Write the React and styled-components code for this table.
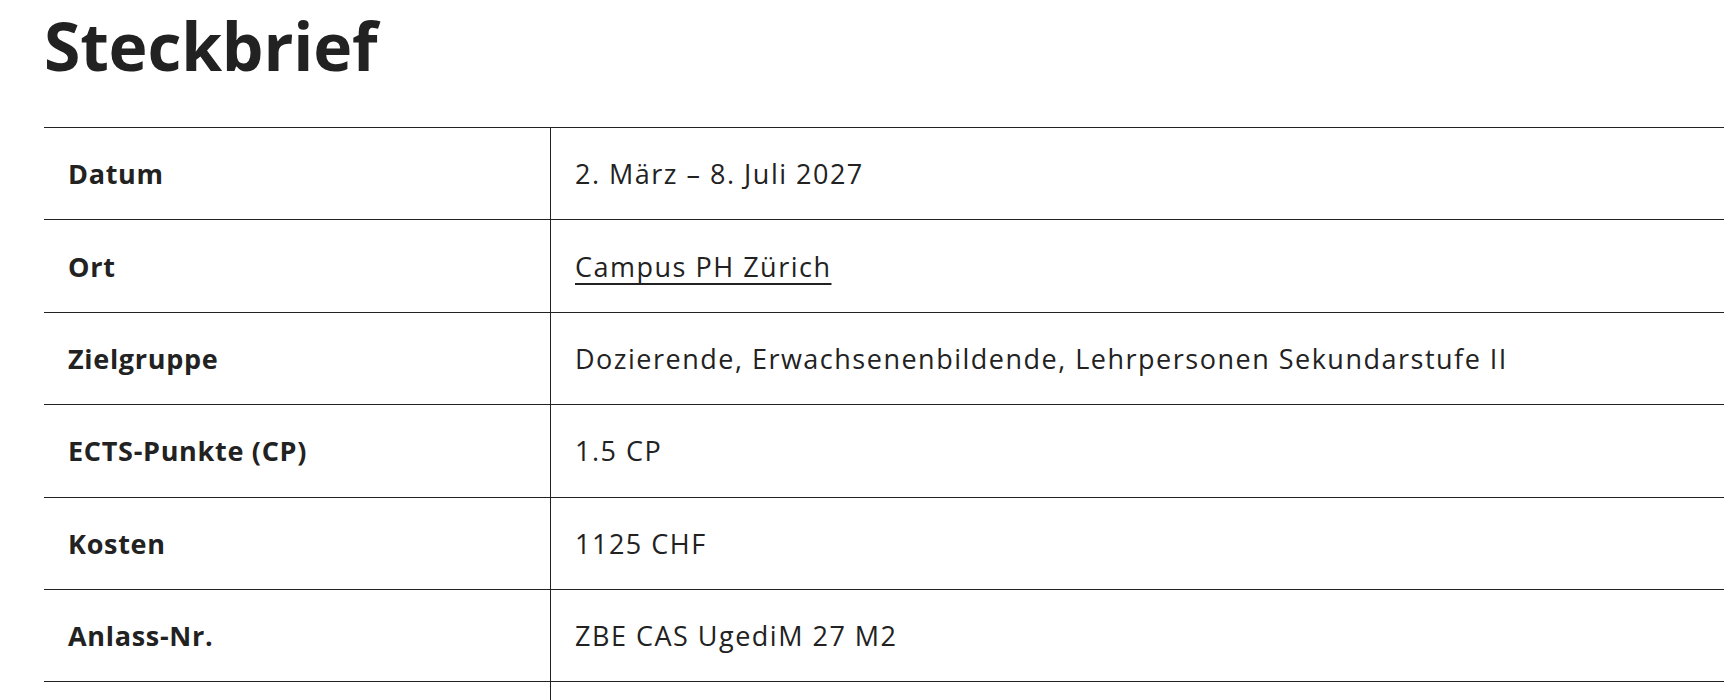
import React from 'react';
import styled, { createGlobalStyle } from 'styled-components';

const GlobalStyle = createGlobalStyle`
  html, body {
    margin: 0;
    padding: 0;
    background: #fff;
  }
  body {
    font-family: "Open Sans", "Liberation Sans", sans-serif;
    color: #222;
  }
`;

const Page = styled.div`
  padding: 0 0 0 44px;
  overflow: hidden;
`;

const Title = styled.h2`
  margin: 0;
  padding-top: 1px;
  font-size: 66px;
  line-height: 88px;
  font-weight: 700;
  letter-spacing: -0.2px;
  color: #222;
`;

const Table = styled.div`
  margin-top: 38px;
  border-top: 1px solid #222;
`;

const Row = styled.div`
  display: grid;
  grid-template-columns: 506px 1fr;
  height: 92.4px;
  border-bottom: 1px solid #222;
  box-sizing: border-box;
`;

const Cell = styled.div`
  display: flex;
  align-items: center;
  padding: 0 24px;
  font-size: 27px;
  font-weight: ${(p) => (p.$label ? 700 : 400)};
  letter-spacing: ${(p) => (p.$label ? '0.7px' : '1.5px')};
  border-left: ${(p) => (p.$label ? 'none' : '1px solid #222')};
`;

const Link = styled.a`
  color: #222;
  text-decoration: underline;
  text-decoration-thickness: 2px;
  text-underline-offset: 6px;
  text-decoration-skip-ink: none;
`;

const rows = [
  ['Datum', '2. März – 8. Juli 2027'],
  ['Ort', 'Campus PH Zürich', true],
  ['Zielgruppe', 'Dozierende, Erwachsenenbildende, Lehrpersonen Sekundarstufe II'],
  ['ECTS-Punkte (CP)', '1.5 CP'],
  ['Kosten', '1125 CHF'],
  ['Anlass-Nr.', 'ZBE CAS UgediM 27 M2'],
  ['', ''],
];

export default function App() {
  return (
    <Page>
      <GlobalStyle />
      <Title>Steckbrief</Title>
      <Table>
        {rows.map(([label, value, link], i) => (
          <Row key={i}>
            <Cell $label>{label}</Cell>
            <Cell>{link ? <Link href="#">{value}</Link> : value}</Cell>
          </Row>
        ))}
      </Table>
    </Page>
  );
}
